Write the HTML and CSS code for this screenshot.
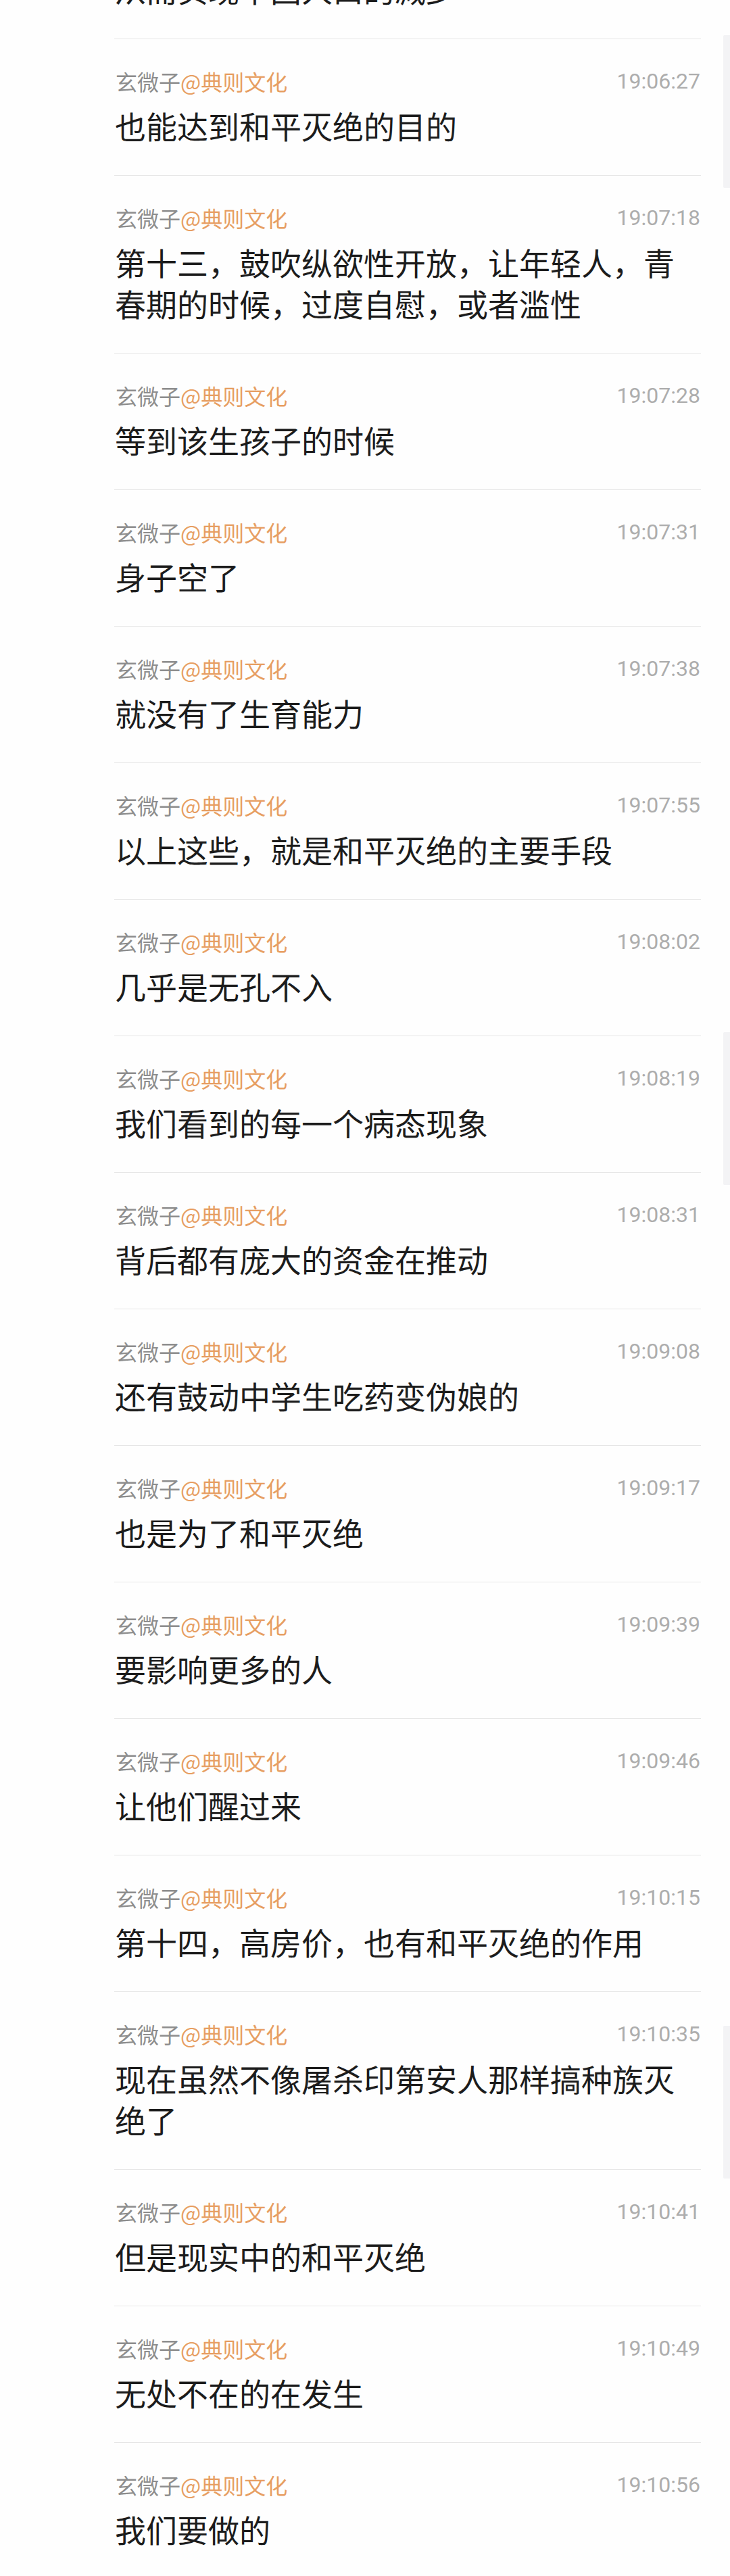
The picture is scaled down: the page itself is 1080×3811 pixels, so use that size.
FILE: index.html
```html
<!DOCTYPE html>
<html lang="zh-CN">
<head>
<meta charset="utf-8">
<title>聊天记录</title>
<link rel="stylesheet" href="styles.css">
</head>
<body>
<div class="page">
  <div class="list">
    <div class="item"><div class="meta"><span class="name">玄微子<span class="group">@典则文化</span></span><span class="time">19:06:19</span></div><div class="text">从而实现中国人口的减少</div></div>
    <div class="item"><div class="meta"><span class="name">玄微子<span class="group">@典则文化</span></span><span class="time">19:06:27</span></div><div class="text">也能达到和平灭绝的目的</div></div>
    <div class="item"><div class="meta"><span class="name">玄微子<span class="group">@典则文化</span></span><span class="time">19:07:18</span></div><div class="text">第十三，鼓吹纵欲性开放，让年轻人，青春期的时候，过度自慰，或者滥性</div></div>
    <div class="item"><div class="meta"><span class="name">玄微子<span class="group">@典则文化</span></span><span class="time">19:07:28</span></div><div class="text">等到该生孩子的时候</div></div>
    <div class="item"><div class="meta"><span class="name">玄微子<span class="group">@典则文化</span></span><span class="time">19:07:31</span></div><div class="text">身子空了</div></div>
    <div class="item"><div class="meta"><span class="name">玄微子<span class="group">@典则文化</span></span><span class="time">19:07:38</span></div><div class="text">就没有了生育能力</div></div>
    <div class="item"><div class="meta"><span class="name">玄微子<span class="group">@典则文化</span></span><span class="time">19:07:55</span></div><div class="text">以上这些，就是和平灭绝的主要手段</div></div>
    <div class="item"><div class="meta"><span class="name">玄微子<span class="group">@典则文化</span></span><span class="time">19:08:02</span></div><div class="text">几乎是无孔不入</div></div>
    <div class="item"><div class="meta"><span class="name">玄微子<span class="group">@典则文化</span></span><span class="time">19:08:19</span></div><div class="text">我们看到的每一个病态现象</div></div>
    <div class="item"><div class="meta"><span class="name">玄微子<span class="group">@典则文化</span></span><span class="time">19:08:31</span></div><div class="text">背后都有庞大的资金在推动</div></div>
    <div class="item"><div class="meta"><span class="name">玄微子<span class="group">@典则文化</span></span><span class="time">19:09:08</span></div><div class="text">还有鼓动中学生吃药变伪娘的</div></div>
    <div class="item"><div class="meta"><span class="name">玄微子<span class="group">@典则文化</span></span><span class="time">19:09:17</span></div><div class="text">也是为了和平灭绝</div></div>
    <div class="item"><div class="meta"><span class="name">玄微子<span class="group">@典则文化</span></span><span class="time">19:09:39</span></div><div class="text">要影响更多的人</div></div>
    <div class="item"><div class="meta"><span class="name">玄微子<span class="group">@典则文化</span></span><span class="time">19:09:46</span></div><div class="text">让他们醒过来</div></div>
    <div class="item"><div class="meta"><span class="name">玄微子<span class="group">@典则文化</span></span><span class="time">19:10:15</span></div><div class="text">第十四，高房价，也有和平灭绝的作用</div></div>
    <div class="item"><div class="meta"><span class="name">玄微子<span class="group">@典则文化</span></span><span class="time">19:10:35</span></div><div class="text">现在虽然不像屠杀印第安人那样搞种族灭绝了</div></div>
    <div class="item"><div class="meta"><span class="name">玄微子<span class="group">@典则文化</span></span><span class="time">19:10:41</span></div><div class="text">但是现实中的和平灭绝</div></div>
    <div class="item"><div class="meta"><span class="name">玄微子<span class="group">@典则文化</span></span><span class="time">19:10:49</span></div><div class="text">无处不在的在发生</div></div>
    <div class="item"><div class="meta"><span class="name">玄微子<span class="group">@典则文化</span></span><span class="time">19:10:56</span></div><div class="text">我们要做的</div></div>
  </div>
  <div class="scroll scroll-1"></div>
  <div class="scroll scroll-2"></div>
  <div class="scroll scroll-3"></div>
</div>
</body>
</html>
```

FILE: styles.css
```css
html, body {
  margin: 0;
  padding: 0;
  background: #fefefe;
}

body {
  width: 1080px;
  height: 3811px;
  overflow: hidden;
  font-family: "Noto Sans CJK SC", "Noto Sans", sans-serif;
}

.page {
  position: relative;
  width: 1080px;
  height: 3811px;
  overflow: hidden;
}

.list {
  margin: -144.7px 0 0 169px;
  width: 868px;
  display: flex;
  flex-direction: column;
}

.item {
  border-top: 1px solid #e6e6e6;
  padding: 42px 0 43px;
  display: flex;
  flex-direction: column;
  gap: 15px;
}

.item:first-child {
  border-top-color: transparent;
}

.meta {
  height: 40px;
  line-height: 40px;
  display: flex;
  justify-content: space-between;
  align-items: center;
}

.name {
  font-size: 32px;
  color: #8d8d8d;
  padding-left: 2px;
}

.group {
  color: #e79e62;
}

.time {
  font-family: Roboto, "Liberation Sans", sans-serif;
  font-size: 32px;
  color: #adadad;
  padding-right: 1px;
}

.text {
  font-size: 46px;
  line-height: 61px;
  color: #1c1c1c;
  padding-left: 1px;
}

.scroll {
  position: absolute;
  right: 0;
  width: 10px;
  height: 226px;
  background: #f3f3f5;
  border-radius: 2px 0 0 2px;
}

.scroll-1 { top: 52px; }
.scroll-2 { top: 1527px; }
.scroll-3 { top: 2997px; }
```
